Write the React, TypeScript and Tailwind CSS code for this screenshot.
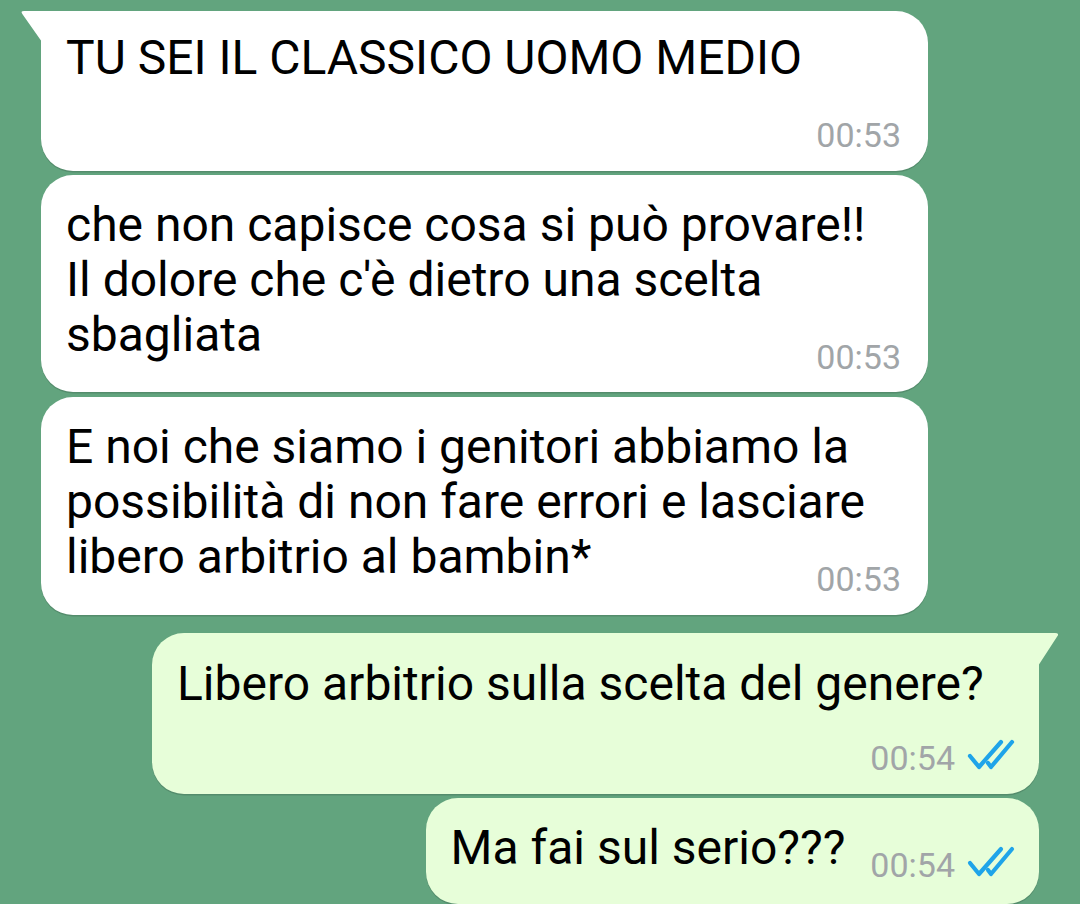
import React from 'react'

// WhatsApp-style chat screenshot: three received bubbles, two sent bubbles

const font = { fontFamily: 'Roboto, "Noto Sans", Arial, sans-serif' }

function Ticks() {
  return (
    <svg width="48" height="31" viewBox="0 0 48 31" fill="none" className="mb-[8px] ml-[12px] shrink-0">
      <path d="M3 17 L12 28 L34 3" stroke="#1fa4e9" strokeWidth="4.2" strokeLinecap="round" strokeLinejoin="round" />
      <path d="M21 24 L24 28 L45 3" stroke="#1fa4e9" strokeWidth="4.2" strokeLinecap="round" strokeLinejoin="round" />
    </svg>
  )
}

function Time({ children }: { children: React.ReactNode }) {
  return <span className="text-[34px] leading-[40px] text-[#a1a5a8] whitespace-nowrap">{children}</span>
}

export default function App() {
  return (
    <div className="h-[904px] w-[1080px] overflow-hidden bg-[#62a47e] pt-[11px]" style={font}>
      <div className="flex flex-col text-black">
        {/* received 1, with tail */}
        <div className="relative ml-[41px] w-[887px] rounded-[32px] rounded-tl-none bg-white pl-[25px] pr-[27px] pt-[19px] pb-[16px] shadow-[0_1.5px_0.5px_rgba(0,0,0,0.14)]">
          <svg width="22" height="32" viewBox="0 0 22 32" className="absolute right-full top-0 -mr-px">
            <path d="M22 0 H4 Q0 0 2.5 3.2 L22 31 Z" fill="#ffffff" />
          </svg>
          <p className="text-[48px] leading-[55px]">TU SEI IL CLASSICO UOMO MEDIO</p>
          <div className="mt-[30px] flex justify-end">
            <Time>00:53</Time>
          </div>
        </div>

        {/* received 2 */}
        <div className="mt-[4px] ml-[41px] w-[887px] rounded-[32px] bg-white pl-[25px] pr-[27px] pt-[22px] pb-[15px] shadow-[0_1.5px_0.5px_rgba(0,0,0,0.14)]">
          <p className="text-[48px] leading-[55px] whitespace-nowrap">
            che non capisce cosa si può provare!!
            <br />
            Il dolore che c'è dietro una scelta
            <br />
            sbagliata
          </p>
          <div className="-mt-[25px] flex justify-end">
            <Time>00:53</Time>
          </div>
        </div>

        {/* received 3 */}
        <div className="mt-[5px] ml-[41px] w-[887px] rounded-[32px] bg-white pl-[25px] pr-[27px] pt-[22px] pb-[16px] shadow-[0_1.5px_0.5px_rgba(0,0,0,0.14)]">
          <p className="text-[48px] leading-[55px] whitespace-nowrap">
            E noi che siamo i genitori abbiamo la
            <br />
            possibilità di non fare errori e lasciare
            <br />
            libero arbitrio al bambin*
          </p>
          <div className="-mt-[25px] flex justify-end">
            <Time>00:53</Time>
          </div>
        </div>

        {/* sent 1, with tail */}
        <div className="relative mt-[18px] mr-[41px] ml-auto w-[887px] rounded-[32px] rounded-tr-none bg-[#e7fed9] pl-[25px] pr-[24px] pt-[23px] pb-[16px] shadow-[0_1.5px_0.5px_rgba(0,0,0,0.14)]">
          <svg width="22" height="34" viewBox="0 0 22 34" className="absolute left-full top-0 -ml-px">
            <path d="M0 0 H17 Q22 0 19 3.8 L0 33 Z" fill="#e7fed9" />
          </svg>
          <p className="text-[48px] leading-[55px]">Libero arbitrio sulla scelta del genere?</p>
          <div className="mt-[27px] flex items-end justify-end">
            <Time>00:54</Time>
            <Ticks />
          </div>
        </div>

        {/* sent 2 */}
        <div className="mt-[4px] mr-[41px] ml-auto flex items-end rounded-[32px] bg-[#e7fed9] pl-[25px] pr-[24px] pt-[22px] pb-[19px] shadow-[0_1.5px_0.5px_rgba(0,0,0,0.14)]">
          <p className="mb-[10px] text-[48px] leading-[55px] whitespace-nowrap">Ma fai sul serio???</p>
          <div className="ml-[25px] flex items-end">
            <Time>00:54</Time>
            <Ticks />
          </div>
        </div>
      </div>
    </div>
  )
}
